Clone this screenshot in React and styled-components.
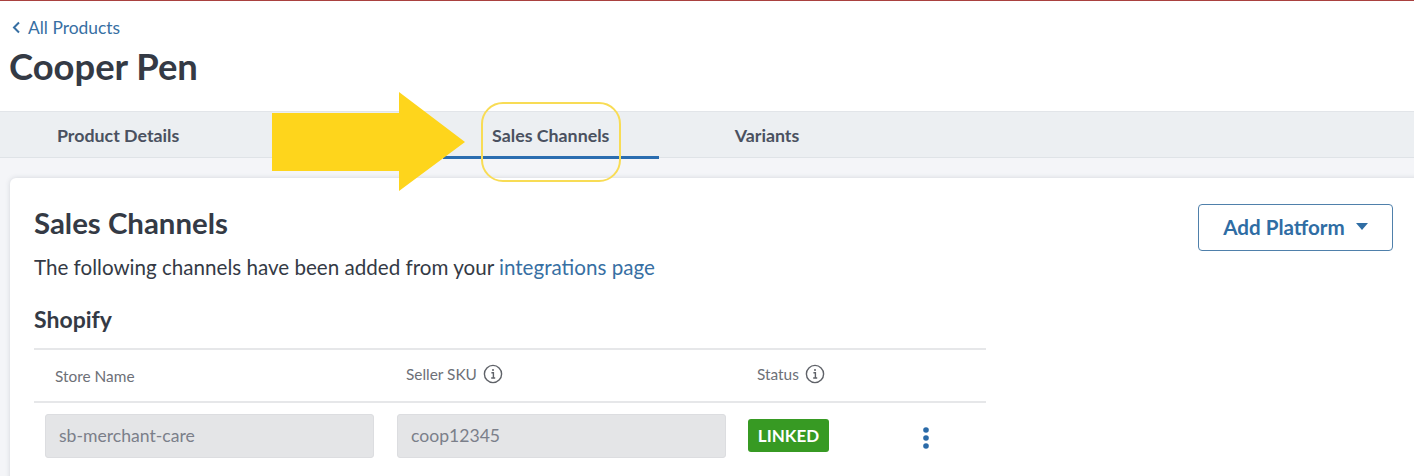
import React from "react";
import styled, { createGlobalStyle } from "styled-components";

const GlobalStyle = createGlobalStyle`
  html, body {
    margin: 0;
    height: 476px;
    overflow: hidden;
    background: #fff;
  }
  * { box-sizing: border-box; }
  body {
    font-family: "Lato", "Open Sans", sans-serif;
    color: #343a45;
  }
`;

const Page = styled.div`
  position: relative;
  width: 1414px;
  height: 476px;
  overflow: hidden;
  border-top: 1px solid #a9413f;
`;

const Header = styled.header`
  height: 110px;
  padding: 15px 0 0 9px;
`;

const BackLink = styled.a`
  display: flex;
  align-items: center;
  gap: 7px;
  height: 22px;
  padding-left: 3px;
  font-size: 17.4px;
  color: #376fa3;
`;

const Title = styled.h1`
  margin: 7px 0 0;
  font-size: 36.4px;
  line-height: 42px;
  font-weight: 700;
  color: #343a45;
`;

const TabBar = styled.nav`
  display: flex;
  height: 47px;
  padding-left: 10px;
  background: #eceff2;
  border-top: 1px solid #e2e5e9;
  border-bottom: 1px solid #dfe3e7;
`;

const Tab = styled.div`
  display: flex;
  align-items: center;
  justify-content: center;
  width: 216.3px;
  height: 47px;
  padding-top: 2px;
  font-size: 17.8px;
  font-weight: 700;
  color: #4a5160;
  border-bottom: 3px solid ${(p) => (p.$active ? "#2a6db0" : "transparent")};
`;

const Body = styled.main`
  height: 318px;
  padding: 20px 0 0 10px;
  background: #f4f5f8;
`;

const Card = styled.section`
  position: relative;
  width: 1420px;
  height: 320px;
  padding: 28px 24px 0;
  background: #fff;
  border-radius: 6px;
  box-shadow: 0 0 5px rgba(60, 70, 90, 0.18);
`;

const CardHead = styled.div`
  display: flex;
  justify-content: space-between;
  align-items: flex-start;
  width: 1359px;
`;

const SectionTitle = styled.h2`
  margin: 0;
  font-size: 29.4px;
  line-height: 34px;
  font-weight: 700;
  color: #343a45;
`;

const AddButton = styled.button`
  display: flex;
  align-items: center;
  justify-content: center;
  gap: 11px;
  width: 195px;
  height: 47px;
  margin-top: -2px;
  padding: 0 0 2px;
  font: 700 20.6px "Lato", sans-serif;
  color: #2f6da4;
  background: #fff;
  border: 1px solid #4f80ab;
  border-radius: 4px;
`;

const Caret = styled.span`
  width: 0;
  height: 0;
  border-left: 6px solid transparent;
  border-right: 6px solid transparent;
  border-top: 7px solid #2f6da4;
`;

const Intro = styled.p`
  margin: 3px 0 0;
  font-size: 20.6px;
  line-height: 26px;
  color: #343a45;
`;

const Link = styled.a`
  color: #376fa3;
`;

const Platform = styled.h3`
  margin: 25px 0 0;
  font-size: 23px;
  line-height: 28px;
  font-weight: 700;
  color: #343a45;
`;

const Table = styled.div`
  width: 952px;
  margin-top: 15px;
  border-top: 2px solid #e6e7e9;
`;

const HeadRow = styled.div`
  display: grid;
  grid-template-columns: 351px 351px 1fr;
  align-items: center;
  height: 53px;
  padding-left: 11px;
  border-bottom: 2px solid #e6e7e9;
`;

const HeadCell = styled.div`
  display: flex;
  align-items: center;
  gap: 6px;
  padding-left: 10px;
  font-size: 15.4px;
  color: #6d7077;
  transform: translateY(${(p) => p.$shift || 0}px);
`;

const DataRow = styled.div`
  display: grid;
  grid-template-columns: 352px 351px 174px 1fr;
  align-items: center;
  padding: 11px 0 0 11px;
`;

const ReadOnlyField = styled.div`
  display: flex;
  align-items: center;
  width: 329px;
  height: 44px;
  padding: 0 0 2px 13px;
  font-size: 17.6px;
  color: #7b7f8a;
  background: #e4e5e7;
  border: 1px solid #dcdde0;
  border-radius: 3px;
`;

const Badge = styled.span`
  display: flex;
  align-items: center;
  justify-content: center;
  width: 81px;
  height: 33px;
  margin-top: -1px;
  font-size: 17px;
  font-weight: 700;
  color: #fff;
  background: #379a23;
  border-radius: 3px;
`;

const Kebab = styled.svg`
  display: block;
  margin-top: 3px;
`;

const Arrow = styled.svg`
  position: absolute;
  left: 272px;
  top: 90px;
`;

const Callout = styled.div`
  position: absolute;
  left: 481px;
  top: 101px;
  width: 140px;
  height: 80px;
  border: 2px solid #f8dc55;
  border-radius: 22px;
`;

const InfoIcon = () => (
  <svg width="20" height="20" viewBox="0 0 20 20" fill="none" stroke="#5f6268">
    <circle cx="10" cy="10" r="8.6" strokeWidth="1.4" />
    <path d="M8.4 8.7H10.4V14M8.2 14H12.2" strokeWidth="1.4" />
    <circle cx="10" cy="6" r="1" fill="#5f6268" stroke="none" />
  </svg>
);

const App = () => {
  return (
    <Page>
      <GlobalStyle />
      <Header>
        <BackLink>
          <svg width="9" height="13" viewBox="0 0 9 13" fill="none">
            <path d="M7 1.5L2 6.5L7 11.5" stroke="#376fa3" strokeWidth="2" />
          </svg>
          All Products
        </BackLink>
        <Title>Cooper Pen</Title>
      </Header>
      <TabBar>
        <Tab>Product Details</Tab>
        <Tab />
        <Tab $active>Sales Channels</Tab>
        <Tab>Variants</Tab>
      </TabBar>
      <Body>
        <Card>
          <CardHead>
            <SectionTitle>Sales Channels</SectionTitle>
            <AddButton>
              Add Platform
              <Caret />
            </AddButton>
          </CardHead>
          <Intro>
            The following channels have been added from your{" "}
            <Link>integrations page</Link>
          </Intro>
          <Platform>Shopify</Platform>
          <Table>
            <HeadRow>
              <HeadCell>Store Name</HeadCell>
              <HeadCell $shift={-2}>
                Seller SKU <InfoIcon />
              </HeadCell>
              <HeadCell $shift={-2}>
                Status <InfoIcon />
              </HeadCell>
            </HeadRow>
            <DataRow>
              <ReadOnlyField>sb-merchant-care</ReadOnlyField>
              <ReadOnlyField>coop12345</ReadOnlyField>
              <Badge>LINKED</Badge>
              <Kebab width="8" height="24" viewBox="0 0 8 24" fill="#2a6aa8">
                <circle cx="4" cy="4" r="2.8" />
                <circle cx="4" cy="12" r="2.8" />
                <circle cx="4" cy="20" r="2.8" />
              </Kebab>
            </DataRow>
          </Table>
        </Card>
      </Body>
      <Arrow width="194" height="102" viewBox="0 0 194 102">
        <path d="M0 22H127V1L193 51L127 100V80H0Z" fill="#fed51c" />
      </Arrow>
      <Callout />
    </Page>
  );
};

export default App;
